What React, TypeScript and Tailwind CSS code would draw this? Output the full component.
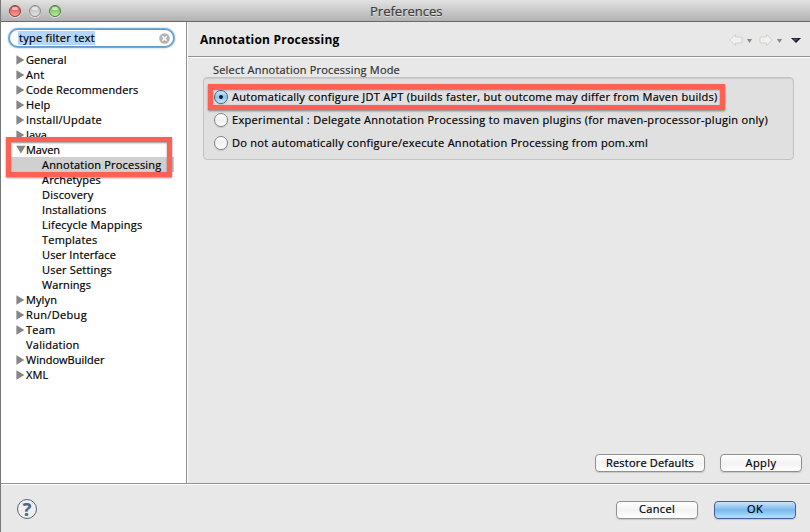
import { useLayoutEffect, useRef } from "react";

type FitProps = { text: string; width: number; className?: string };

// Single line of text whose letter spacing is adjusted to fill the given width.
function Fit({ text, width, className = "" }: FitProps) {
  const ref = useRef<HTMLSpanElement>(null);
  useLayoutEffect(() => {
    const el = ref.current;
    if (!el) return;
    el.style.letterSpacing = "0px";
    const natural = el.getBoundingClientRect().width;
    el.style.letterSpacing = `${(width - natural) / text.length}px`;
  }, [text, width]);
  return (
    <span ref={ref} className={`inline-block shrink-0 whitespace-nowrap ${className}`}>
      {text}
    </span>
  );
}

type Item = { label: string; width: number; kind: "closed" | "open" | "leaf" | "child"; selected?: boolean };

const items: Item[] = [
  { label: "General", width: 40.5, kind: "closed" },
  { label: "Ant", width: 18.5, kind: "closed" },
  { label: "Code Recommenders", width: 112.5, kind: "closed" },
  { label: "Help", width: 24.5, kind: "closed" },
  { label: "Install/Update", width: 76, kind: "closed" },
  { label: "Java", width: 21, kind: "closed" },
  { label: "Maven", width: 34, kind: "open" },
  { label: "Annotation Processing", width: 119.5, kind: "child", selected: true },
  { label: "Archetypes", width: 59, kind: "child" },
  { label: "Discovery", width: 51.5, kind: "child" },
  { label: "Installations", width: 64.5, kind: "child" },
  { label: "Lifecycle Mappings", width: 100.5, kind: "child" },
  { label: "Templates", width: 55.5, kind: "child" },
  { label: "User Interface", width: 74, kind: "child" },
  { label: "User Settings", width: 70, kind: "child" },
  { label: "Warnings", width: 49, kind: "child" },
  { label: "Mylyn", width: 31, kind: "closed" },
  { label: "Run/Debug", width: 61, kind: "closed" },
  { label: "Team", width: 29.5, kind: "closed" },
  { label: "Validation", width: 53.5, kind: "leaf" },
  { label: "WindowBuilder", width: 78.5, kind: "closed" },
  { label: "XML", width: 22.5, kind: "closed" },
];

function TreeRow({ item }: { item: Item }) {
  return (
    <li className={`flex h-[15px] w-[163px] items-center ${item.selected ? "bg-[#d0d0d0]" : ""}`}>
      <span className={`flex shrink-0 items-center pl-[5px] ${item.kind === "child" ? "w-[31px]" : "w-[15px]"}`}>
        {item.kind === "closed" && (
          <svg width="9" height="10" viewBox="0 0 9 10">
            <path d="M.4 .3 8.4 5 .4 9.7z" fill="#868686" />
          </svg>
        )}
        {item.kind === "open" && (
          <svg width="10" height="9" viewBox="0 0 10 9">
            <path d="M.2 .8h9.4L4.9 8.4z" fill="#868686" />
          </svg>
        )}
      </span>
      <Fit text={item.label} width={item.width} />
    </li>
  );
}

function Light({ className }: { className: string }) {
  return (
    <span className={`flex h-[12px] w-[12px] justify-center rounded-full border shadow-[0_1px_0_#ffffff90] ${className}`}>
      <span className="mt-px h-[3px] w-[6px] rounded-full bg-white/60" />
    </span>
  );
}

function Radio({ text, width, checked = false }: { text: string; width: number; checked?: boolean }) {
  return (
    <div className="flex h-[23px] items-center">
      <span
        className={`mr-[4px] flex h-[14px] w-[14px] shrink-0 items-center justify-center rounded-full border shadow-[0_1px_1px_#00000020] ${
          checked
            ? "border-[#4b6487] bg-linear-to-b from-[#d6e7f8] via-[#8fc0ee] to-[#c7f0ff]"
            : "border-[#858585] bg-linear-to-b from-[#ffffff] via-[#f0f0f0] to-[#ffffff]"
        }`}
      >
        {checked && <span className="h-[4px] w-[4px] rounded-full bg-[#101c30]" />}
      </span>
      <Fit text={text} width={width} />
    </div>
  );
}

function Button({ text, width, className, primary = false }: { text: string; width: number; className: string; primary?: boolean }) {
  return (
    <button
      className={`flex h-[18px] items-center justify-center rounded-[4px] border pb-[2px] shadow-[0_1px_1px_#00000025] ${className} ${
        primary
          ? "border-[#4c5a9c] bg-linear-to-b from-[#cfe3f8] via-[#78b8ed] to-[#b4e5fd]"
          : "border-[#909090] bg-linear-to-b from-[#ffffff] via-[#f3f3f3] to-[#ffffff]"
      }`}
    >
      <Fit text={text} width={width} />
    </button>
  );
}

export default function App() {
  return (
    <div className="relative flex h-[532px] w-[810px] flex-col overflow-hidden border-l border-[#777777] bg-[#e8e8e8] font-['Open_Sans','Noto_Sans',sans-serif] text-[11px] leading-[15px] text-black [-webkit-text-stroke:0.2px]">
      <header className="flex h-[22px] shrink-0 items-center border-b border-[#686868] bg-linear-to-b from-[#e2e2e2] to-[#b2b2b2]">
        <div className="flex w-[369px] shrink-0 gap-[8px] pl-[8px]">
          <Light className="border-[#8f3d3b] bg-linear-to-b from-[#d94b48] to-[#ff9c96]" />
          <Light className="border-[#8b8b8b] bg-linear-to-b from-[#b8b8b8] to-[#e4e4e4]" />
          <Light className="border-[#4a7e3d] bg-linear-to-b from-[#6cae57] to-[#b8ee98]" />
        </div>
        <Fit text="Preferences" width={72.5} className="pt-[2px] text-[13px] text-[#3e3e3e] [text-shadow:0_1px_0_#ffffff80]" />
      </header>

      <div className="flex h-[461px] shrink-0">
        <aside className="w-[186px] shrink-0 border-r border-[#929292] bg-white pl-[10px]">
          <div className="-ml-[2px] mt-[7px] flex h-[18px] w-[165px] items-center rounded-full border border-[#649bca] bg-white pl-[8px] shadow-[0_0_0_1px_#75a9d5,0_0_2px_1px_#8cbce3]">
            <Fit text="type filter text" width={77} className="h-[14px] bg-[#b4d5fe] pl-[1px] leading-[14px]" />
            <svg className="ml-auto mr-[3px]" width="11" height="11" viewBox="0 0 11 11">
              <circle cx="5.5" cy="5.5" r="5.3" fill="#b3b3b3" />
              <path d="m3.3 3.3 4.4 4.4m0-4.4L3.3 7.7" stroke="#fff" strokeWidth="1.5" />
            </svg>
          </div>
          <ul className="mt-[5px]">
            {items.map((item) => (
              <TreeRow key={item.label} item={item} />
            ))}
          </ul>
        </aside>

        <main className="flex min-w-0 flex-1 flex-col border-l border-white">
          <div className="flex h-[35px] shrink-0 items-center justify-between border-b border-[#929292] pl-[12px] pr-[8px] shadow-[0_1px_0_#ffffff]">
            <Fit text="Annotation Processing" width={139.5} className="text-[12px] font-bold [-webkit-text-stroke:0px]" />
            <svg className="mt-[2px]" width="73" height="14" viewBox="0 0 73 14" fill="none">
              <path d="M.7 7 6.5 1.5V4H13v6H6.5v2.5z" fill="#f0f0ef" stroke="#d1d1cd" />
              <path d="M18 6h5l-2.5 4z" fill="#858585" />
              <path d="M43.3 7 37.5 1.5V4H31v6h6.5v2.5z" fill="#f0f0ef" stroke="#d1d1cd" />
              <path d="M48 6h5l-2.5 4z" fill="#858585" />
              <path d="M62 5h10l-5 5z" fill="#171522" />
              <path d="M63.5 5.5h6L66.5 8.5z" fill="#46408b" />
            </svg>
          </div>

          <section className="mt-[5px] pl-[15px] pr-[16px]">
            <Fit text="Select Annotation Processing Mode" width={187} className="ml-[10px] block text-[#303030]" />
            <div className="h-[83px] rounded-[4px] border border-[#c2c2c2] bg-[#e0e0e0] pl-[10px] pt-[7px] shadow-[inset_0_1px_1px_#00000018]">
              <Radio checked text="Automatically configure JDT APT (builds faster, but outcome may differ from Maven builds)" width={485.5} />
              <Radio text="Experimental : Delegate Annotation Processing to maven plugins (for maven-processor-plugin only)" width={536} />
              <Radio text="Do not automatically configure/execute Annotation Processing from pom.xml" width={416} />
            </div>
          </section>

          <div className="mt-auto flex justify-end gap-[15px] pb-[11px] pr-[8px]">
            <Button text="Restore Defaults" width={88} className="w-[110px]" />
            <Button text="Apply" width={31} className="w-[82px]" />
          </div>
        </main>
      </div>

      <footer className="flex h-[49px] shrink-0 items-center border-t border-[#929292] pl-[16px] pr-[14px] shadow-[inset_0_1px_0_#ffffff]">
        <span className="mt-[2px] flex h-[20px] w-[20px] items-center justify-center rounded-full border-[1.5px] border-[#536582] bg-[#f0f0f0] text-[18px] font-bold leading-none text-[#536582]">
          ?
        </span>
        <div className="ml-auto mt-[3px] flex gap-[16px]">
          <Button text="Cancel" width={36} className="w-[82px]" />
          <Button primary text="OK" width={16} className="w-[82px]" />
        </div>
      </footer>

      <div className="absolute left-[5px] top-[137px] h-[40px] w-[166px] border-[5px] border-[#ff6054] shadow-[0_1px_2px_#00000070,inset_0_1px_2px_#00000070]" />
      <div className="absolute left-[207px] top-[84px] h-[26px] w-[517px] border-[5px] border-[#ff6054] shadow-[0_1px_2px_#00000070,inset_0_1px_2px_#00000070]" />
    </div>
  );
}
